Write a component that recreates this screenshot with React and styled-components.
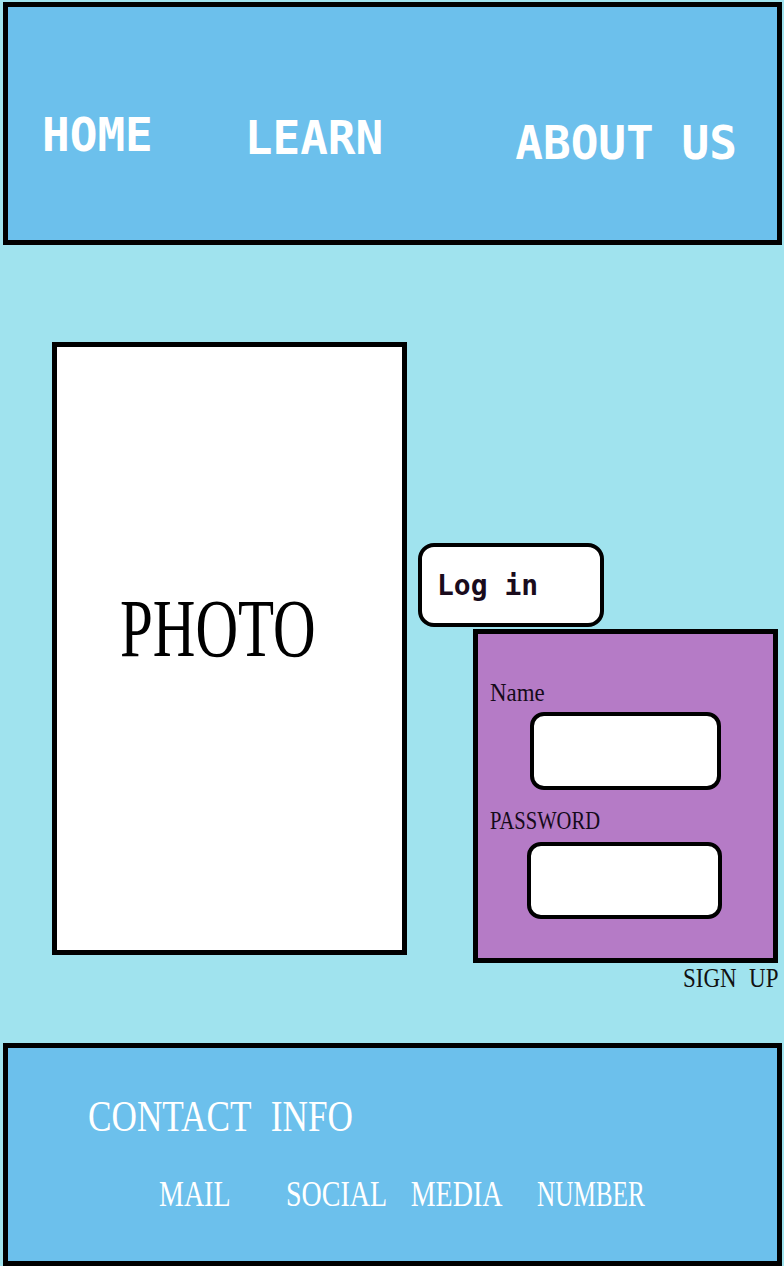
import React from "react";
import styled, { createGlobalStyle, css } from "styled-components";

const GlobalStyle = createGlobalStyle`
  body {
    margin: 0;
    background: #a0e3ee;
  }
`;

const condensed = css`
  display: inline-block;
  font-family: "Liberation Serif", "Times New Roman", serif;
  line-height: 1;
  white-space: pre;
  transform-origin: left center;
`;

const App = () => {
  return (
    <Page>
      <GlobalStyle />
      <Header>
        <NavLink $x={0} $y={0}>HOME</NavLink>
        <NavLink $x={92} $y={3}>LEARN</NavLink>
        <NavLink $x={132} $y={8}>ABOUT US</NavLink>
      </Header>
      <Main>
        <Photo>
          <PhotoLabel>PHOTO</PhotoLabel>
        </Photo>
        <RightCol>
          <LoginButton>Log in</LoginButton>
          <SignupBox>
            <FieldLabel $squeeze={0.88}>Name</FieldLabel>
            <Field $w={191} $h={78} $x={40} $top={6} />
            <FieldLabel $squeeze={0.79} $top={18}>PASSWORD</FieldLabel>
            <Field $w={195} $h={77} $x={37} $top={8} type="password" />
          </SignupBox>
          <SignUpLink>SIGN UP</SignUpLink>
        </RightCol>
      </Main>
      <Footer>
        <ContactTitle>CONTACT INFO</ContactTitle>
        <ContactRow>
          <ContactSlot $w={127}>
            <ContactLink $squeeze={0.8}>MAIL</ContactLink>
          </ContactSlot>
          <ContactSlot $w={251}>
            <ContactLink $squeeze={0.8} $gap={22}>SOCIAL MEDIA</ContactLink>
          </ContactSlot>
          <ContactSlot>
            <ContactLink $squeeze={0.72}>NUMBER</ContactLink>
          </ContactSlot>
        </ContactRow>
      </Footer>
    </Page>
  );
};

const Page = styled.div`
  width: 784px;
  height: 1266px;
  display: flex;
  flex-direction: column;
  overflow: hidden;
  background: #a0e3ee;
`;

const Header = styled.header`
  box-sizing: border-box;
  margin: 2px 2px 0 3px;
  height: 243px;
  border: 5px solid #000;
  background: #6cc0ec;
  display: flex;
  align-items: flex-start;
  padding: 105px 0 0 34px;
`;

const NavLink = styled.a`
  font-family: "DejaVu Sans Mono", monospace;
  font-weight: bold;
  font-size: 46px;
  line-height: 1;
  color: #fff;
  white-space: pre;
  flex-shrink: 0;
  margin-left: ${p => p.$x}px;
  margin-top: ${p => p.$y}px;
`;

const Main = styled.main`
  box-sizing: border-box;
  height: 798px;
  display: flex;
  align-items: flex-start;
  padding-left: 52px;
`;

const Photo = styled.div`
  box-sizing: border-box;
  flex-shrink: 0;
  margin-top: 97px;
  width: 355px;
  height: 613px;
  border: 5px solid #000;
  background: #fff;
  padding: 241px 0 0 63px;
`;

const PhotoLabel = styled.span`
  ${condensed};
  font-size: 82px;
  color: #000;
  transform: scaleX(0.72);
`;

const RightCol = styled.div`
  flex-shrink: 0;
  display: flex;
  flex-direction: column;
  align-items: flex-start;
  margin: 298px 0 0 11px;
`;

const LoginButton = styled.div`
  box-sizing: border-box;
  width: 186px;
  height: 84px;
  border: 4px solid #000;
  border-radius: 16px;
  background: #fff;
  display: flex;
  align-items: center;
  padding: 2px 0 0 15px;
  font-family: "DejaVu Sans Mono", monospace;
  font-weight: bold;
  font-size: 28px;
  line-height: 1;
  color: #1a0b1c;
`;

const SignupBox = styled.div`
  box-sizing: border-box;
  margin: 2px 0 0 55px;
  width: 305px;
  height: 334px;
  border: 5px solid #000;
  background: #b57bc6;
  display: flex;
  flex-direction: column;
  align-items: flex-start;
  padding: 46px 0 0 12px;
`;

const FieldLabel = styled.span`
  ${condensed};
  font-size: 26px;
  color: #160a1a;
  margin-top: ${p => p.$top || 0}px;
  transform: scaleX(${p => p.$squeeze});
`;

const Field = styled.input`
  box-sizing: border-box;
  width: ${p => p.$w}px;
  height: ${p => p.$h}px;
  margin: ${p => p.$top}px 0 0 ${p => p.$x}px;
  border: 4px solid #000;
  border-radius: 14px;
  background: #fff;
  outline: none;
  padding: 0 12px;
`;

const SignUpLink = styled.a`
  ${condensed};
  font-size: 27px;
  color: #111;
  margin: 2px 0 0 265px;
  word-spacing: 8px;
  transform: scaleX(0.85);
`;

const Footer = styled.footer`
  box-sizing: border-box;
  margin: 0 2px 0 3px;
  height: 223px;
  border: 5px solid #000;
  background: #6cc0ec;
  padding: 47px 0 0 80px;
`;

const ContactTitle = styled.h2`
  ${condensed};
  margin: 0;
  font-weight: normal;
  font-size: 44px;
  color: #fff;
  word-spacing: 14px;
  transform: scaleX(0.8);
`;

const ContactRow = styled.div`
  display: flex;
  margin: 38px 0 0 71px;
`;

const ContactSlot = styled.div`
  flex-shrink: 0;
  width: ${p => (p.$w ? `${p.$w}px` : "auto")};
`;

const ContactLink = styled.a`
  ${condensed};
  font-size: 35px;
  color: #fff;
  word-spacing: ${p => p.$gap || 0}px;
  transform: scaleX(${p => p.$squeeze});
`;

export default App;
